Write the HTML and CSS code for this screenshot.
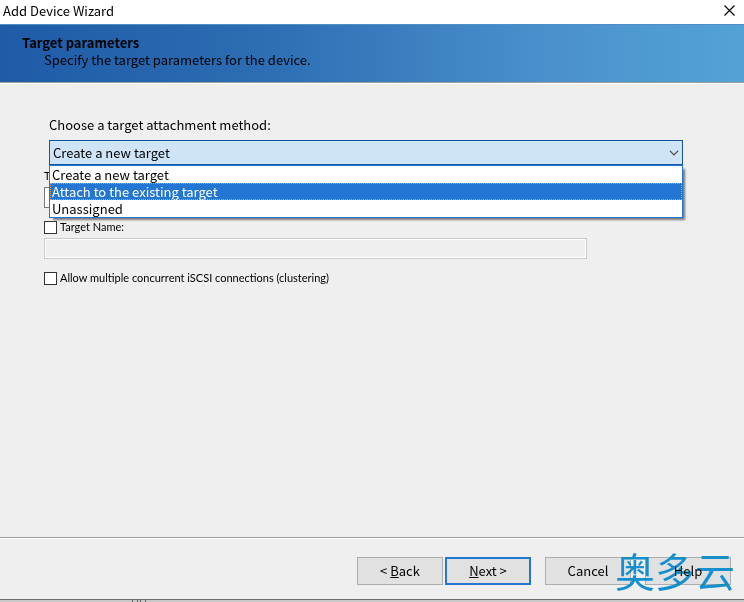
FILE: index.html
```html
<!DOCTYPE html>
<html lang="en">
<head>
  <meta charset="UTF-8">
  <meta name="viewport" content="width=device-width, initial-scale=1.0">
  <title>Add Device Wizard</title>
  <link rel="stylesheet" href="styles.css">
</head>
<body>
<div class="window">
  <div class="titlebar">
    <span>Add Device Wizard</span>
    <button type="button" class="close" aria-label="Close">
      <svg width="11" height="11" viewBox="0 0 11 11"><path d="M0.5 0.5l10 10M10.5 0.5l-10 10" fill="none" stroke="#000" stroke-width="1.1"/></svg>
    </button>
  </div>
  <header class="banner">
    <h1>Target parameters</h1>
    <p>Specify the target parameters for the device.</p>
  </header>
  <main class="content">
    <div class="method">
      <label for="method">Choose a target attachment method:</label>
      <div class="combo">
        <select id="method">
          <option>Create a new target</option>
          <option>Attach to the existing target</option>
          <option>Unassigned</option>
        </select>
        <svg class="arrow" width="10" height="6" viewBox="0 0 10 6"><path d="M1 0.8l4 4 4-4" fill="none" stroke="#444" stroke-width="1.2"/></svg>
        <!-- opened list -->
        <ul class="list">
          <li>Create a new target</li>
          <li class="selected">Attach to the existing target</li>
          <li>Unassigned</li>
        </ul>
      </div>
    </div>
    <div class="fields">
      <label class="row" for="alias">T</label>
      <input type="text" class="text" id="alias">
      <div class="row">
        <input type="checkbox" id="useName">
        <label for="useName">Target Name:</label>
      </div>
      <input type="text" class="text" aria-label="Target Name" disabled>
      <div class="row">
        <input type="checkbox" id="clustering">
        <label for="clustering">Allow multiple concurrent iSCSI connections (clustering)</label>
      </div>
    </div>
  </main>
  <footer class="buttons">
    <div class="pair">
      <button type="button">&lt; <u>B</u>ack</button>
      <button type="button" class="default"><u>N</u>ext &gt;</button>
    </div>
    <button type="button">Cancel</button>
    <button type="button">Help</button>
    <span class="watermark" lang="zh">奥多云</span>
  </footer>
</div>
<div class="behind">
  <svg width="14" height="2" viewBox="0 0 14 2"><path d="M0.5 0v2M5.5 0v2M8.5 0v2M13.5 0v2" stroke="#666"/></svg>
</div>
</body>
</html>
```

FILE: styles.css
```css
:root {
  --face: #efefef;
  --accent: #2476d3;
  --line: #9e9e9e;
}

* {
  box-sizing: border-box;
}

body {
  display: flex;
  flex-direction: column;
  min-height: 100vh;
  margin: 0;
  background-color: #c8c8c8;
  color: #000;
  font: 13px/17px "Noto Sans CJK SC", sans-serif;
}

button, select, input {
  font: inherit;
  color: inherit;
}

.window {
  display: flex;
  flex-direction: column;
  flex: 1;
  background-color: var(--face);
  border-bottom: 1px solid #6c6c6c;
}

.titlebar {
  display: flex;
  justify-content: space-between;
  align-items: center;
  height: 24px;
  padding: 0 9px 3px 3px;
  background-color: #fff;
}

.close {
  display: flex;
  padding: 0;
  border: 0;
  background: none;
}

.banner {
  height: 59px;
  padding: 9px 22px;
  background: linear-gradient(to right, #1f5ba7, #2c6db3 35%, #4a90cc 73%, #54a2d6);
  border-top: 1px solid #4f8fc8;
  border-bottom: 1px solid var(--line);
  box-shadow: 0 1px #fff;
}

.banner h1 {
  margin: 0;
  font-size: 13px;
  line-height: 17px;
}

.banner p {
  margin: 0 0 0 22px;
}

.content {
  flex: 1;
  padding: 33px 61px 20px 44px;
}

.method {
  margin-left: 5px;
}

.method label {
  display: block;
  margin-bottom: 7px;
}

.combo {
  position: relative;
}

.combo select {
  display: block;
  width: 100%;
  height: 25px;
  padding: 0 3px;
  appearance: none;
  background-color: #cfe4f7;
  border: 1px solid #16549c;
  border-radius: 0;
}

.arrow {
  position: absolute;
  top: 10px;
  right: 4px;
}

.list {
  position: absolute;
  top: 25px;
  left: 0;
  right: 0;
  margin: 0;
  padding: 0;
  list-style: none;
  background-color: #fff;
  border: 1px solid var(--accent);
  box-shadow: 3px 3px 2px -1px #777;
}

.list li {
  padding: 0 2px;
}

.list .selected {
  background-color: var(--accent);
  color: #fff;
  outline: 1px dotted #f39a4a;
  outline-offset: -1px;
}

.fields {
  padding-top: 1px;
  font: 11px/16px Lato, sans-serif;
}

.row {
  display: flex;
  align-items: center;
  gap: 3px;
  height: 20px;
}

.row input {
  width: 13px;
  height: 13px;
  margin: 0;
  appearance: none;
  background-color: #fff;
  border: 1px solid #333;
}

.text {
  display: block;
  width: 543px;
  max-width: 100%;
  height: 21px;
  margin: 1px 0 9px;
  padding: 0 3px;
  background-color: #fff;
  border: 1px solid #7a7a7a;
}

.text:disabled {
  background-color: var(--face);
  border-color: #ccc;
  box-shadow: inset 0 0 0 1px #fff;
}

.buttons {
  position: relative;
  display: flex;
  justify-content: flex-end;
  gap: 14px;
  padding: 19px 13px 14px;
  border-top: 1px solid var(--line);
  box-shadow: inset 0 1px #fff;
}

.pair {
  display: flex;
  gap: 2px;
}

.buttons button {
  width: 86px;
  height: 28px;
  padding: 0 0 2px;
  background-color: #e1e1e1;
  border: 1px solid #adadad;
}

.buttons .default {
  border: 2px solid var(--accent);
}

.watermark {
  position: absolute;
  right: 9px;
  bottom: 9px;
  color: #158fd0;
  font-size: 40px;
  line-height: 40px;
  mix-blend-mode: darken;
  pointer-events: none;
}

.behind {
  display: flex;
  height: 2px;
  padding-left: 132px;
}
```
